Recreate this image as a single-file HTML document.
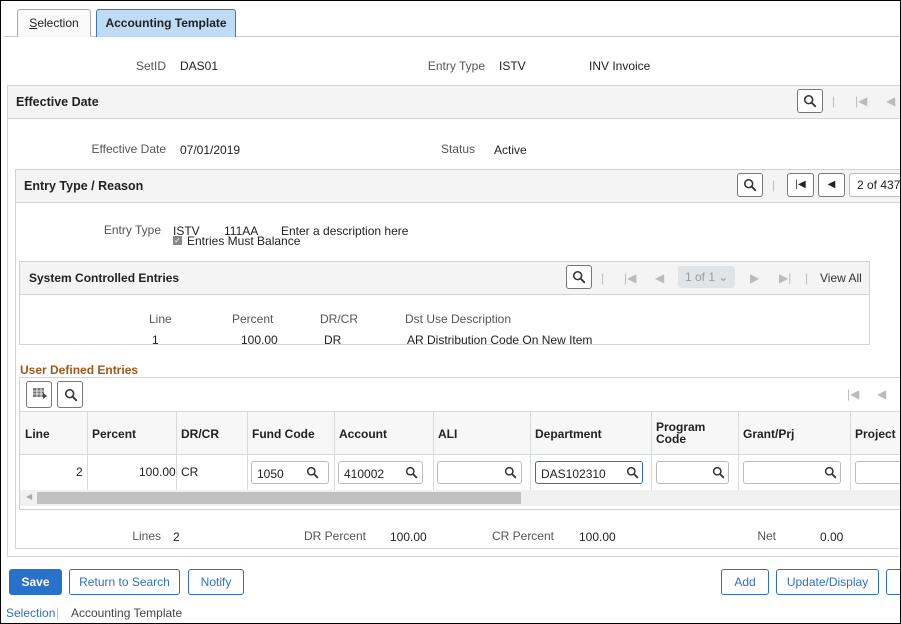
<!DOCTYPE html>
<html><head><style>
*{box-sizing:border-box;margin:0;padding:0}
body{width:901px;height:624px;overflow:hidden;font-family:"Liberation Sans",Arial,sans-serif;font-size:12px;color:#222;background:#fff;position:relative}
.a{position:absolute;white-space:nowrap}
.lbl{color:#555}
.b{font-weight:bold}
.hdr{position:absolute;background:#f4f4f4;border:1px solid #d0d4d8}
.btn{position:absolute;border:1px solid #777;border-radius:3px;background:#fff}
.srch{position:absolute;width:26px;height:24px;border:1px solid #777;border-radius:3px;background:#fff}
.gray{color:#bbb}
.inp{position:absolute;height:23px;border:1px solid #bbb;border-radius:3px;background:#fff;padding:5px 0 0 5px}
.pb{position:absolute;height:26px;border:1px solid #2f6fc7;border-radius:3px;color:#2f6fc7;text-align:center;line-height:24px;font-size:12px;background:#fff}
.col{position:absolute;top:411px;height:79px;border-left:1px solid #d7dbe0}
</style></head><body>
<div class="a" style="left:0;top:0;width:901px;height:624px;border:1px solid #000;z-index:9;pointer-events:none"></div>
<svg width="0" height="0" style="position:absolute"><defs><symbol id="mg" viewBox="0 0 16 16"><circle cx="6.5" cy="6.5" r="4.5" fill="none" stroke="#333" stroke-width="1.8"/><path d="M10 10l4 4" stroke="#333" stroke-width="2.2" stroke-linecap="round"/></symbol></defs></svg>

<!-- tabs -->
<div class="a" style="left:4px;top:36px;width:896px;height:1px;background:#ccc"></div>
<div class="a" style="left:17px;top:9px;width:74px;height:28px;border:1px solid #aaa;border-bottom:none;border-radius:3px 3px 0 0;background:#fafafa;text-align:center;line-height:26px"><u>S</u>election</div>
<div class="a b" style="left:96px;top:9px;width:140px;height:28px;border:1px solid #3c78c3;border-bottom:none;border-radius:3px 3px 0 0;background:#bfdcf7;text-align:center;line-height:26px">Accounting Template</div>

<div class="a lbl" style="right:735px;top:59px">SetID</div>
<div class="a" style="left:180px;top:59px">DAS01</div>
<div class="a lbl" style="right:416px;top:59px">Entry Type</div>
<div class="a" style="left:499px;top:59px">ISTV</div>
<div class="a" style="left:589px;top:59px">INV Invoice</div>

<!-- outer panel -->
<div class="a" style="left:7px;top:85px;width:900px;height:472px;border:1px solid #d0d4d8"></div>
<div class="hdr" style="left:7px;top:85px;width:900px;height:34px"></div>
<div class="a b" style="left:16px;top:95px;font-size:12.5px">Effective Date</div>
<div class="srch" style="left:797px;top:89px"><svg width="14" height="14" style="margin:4px 0 0 5px"><use href="#mg"/></svg></div>
<div class="a gray" style="left:832px;top:94px">|</div>
<div class="a gray" style="left:855px;top:94px">|◀</div>
<div class="a gray" style="left:886px;top:94px">◀</div>

<div class="a lbl" style="right:735px;top:142px">Effective Date</div>
<div class="a" style="left:180px;top:143px">07/01/2019</div>
<div class="a lbl" style="right:426px;top:142px">Status</div>
<div class="a" style="left:494px;top:143px">Active</div>

<!-- entry type panel -->
<div class="a" style="left:15px;top:169px;width:900px;height:380px;border:1px solid #d0d4d8"></div>
<div class="hdr" style="left:15px;top:169px;width:900px;height:34px"></div>
<div class="a b" style="left:24px;top:179px;font-size:12.5px">Entry Type / Reason</div>
<div class="srch" style="left:737px;top:173px"><svg width="14" height="14" style="margin:4px 0 0 5px"><use href="#mg"/></svg></div>
<div class="a gray" style="left:772px;top:178px">|</div>
<div class="btn" style="left:787px;top:173px;width:27px;height:24px;text-align:center;line-height:22px;font-size:10px">|◀</div>
<div class="btn" style="left:818px;top:173px;width:27px;height:24px;text-align:center;line-height:22px;font-size:10px">◀</div>
<div class="btn" style="left:849px;top:173px;width:60px;height:24px;line-height:22px;padding-left:7px;border-color:#bbb">2 of 437</div>

<div class="a lbl" style="right:740px;top:223px">Entry Type</div>
<div class="a" style="left:173px;top:224px">ISTV</div>
<div class="a" style="left:224px;top:224px">111AA</div>
<div class="a" style="left:281px;top:224px">Enter a description here</div>
<div class="a" style="left:173px;top:236px;width:9px;height:9px;background:#888;color:#fff;font-size:8px;line-height:9px;text-align:center">✓</div>
<div class="a" style="left:187px;top:234px">Entries Must Balance</div>

<!-- system controlled -->
<div class="a" style="left:19px;top:261px;width:851px;height:84px;border:1px solid #d0d4d8"></div>
<div class="hdr" style="left:19px;top:261px;width:851px;height:34px"></div>
<div class="a b" style="left:29px;top:271px">System Controlled Entries</div>
<div class="srch" style="left:566px;top:265px"><svg width="14" height="14" style="margin:4px 0 0 5px"><use href="#mg"/></svg></div>
<div class="a gray" style="left:601px;top:271px">|</div>
<div class="a gray" style="left:624px;top:271px">|◀</div>
<div class="a gray" style="left:655px;top:271px">◀</div>
<div class="a" style="left:678px;top:266px;width:57px;height:22px;background:#e1e4e7;border-radius:3px;color:#999;padding:4px 0 0 7px">1 of 1 ⌄</div>
<div class="a gray" style="left:750px;top:271px">▶</div>
<div class="a gray" style="left:779px;top:271px">▶|</div>
<div class="a gray" style="left:805px;top:271px">|</div>
<div class="a" style="left:820px;top:271px;color:#333">View All</div>
<div class="a lbl" style="left:149px;top:312px">Line</div>
<div class="a lbl" style="left:232px;top:312px">Percent</div>
<div class="a lbl" style="left:320px;top:312px">DR/CR</div>
<div class="a lbl" style="left:405px;top:312px">Dst Use Description</div>
<div class="a" style="left:152px;top:333px">1</div>
<div class="a" style="left:241px;top:333px">100.00</div>
<div class="a" style="left:324px;top:333px">DR</div>
<div class="a" style="left:407px;top:333px">AR Distribution Code On New Item</div>

<!-- user defined -->
<div class="a b" style="left:20px;top:363px;color:#a0581c">User Defined Entries</div>
<div class="a" style="left:19px;top:377px;width:900px;height:133px;border:1px solid #d0d4d8"></div>
<div class="srch" style="left:26px;top:381px;height:27px"><svg width="14" height="12" style="margin:6px 0 0 6px"><rect x="0" y="0" width="11" height="9" fill="#777"/><path d="M0 3h11M0 6h11M4 0v9M8 0v9" stroke="#fff" stroke-width="0.8"/><path d="M10 5l4 3-4 3z" fill="#444"/></svg></div>
<div class="srch" style="left:57px;top:381px;height:27px"><svg width="14" height="14" style="margin:6px 0 0 6px"><use href="#mg"/></svg></div>
<div class="a gray" style="left:847px;top:387px">|◀</div>
<div class="a gray" style="left:877px;top:387px">◀</div>
<div class="a" style="left:20px;top:411px;width:880px;height:44px;background:#f7f7f7;border-top:1px solid #d7dbe0;border-bottom:1px solid #d7dbe0"></div>
<div class="col" style="left:87px"></div><div class="col" style="left:176px"></div><div class="col" style="left:247px"></div><div class="col" style="left:334px"></div><div class="col" style="left:433px"></div><div class="col" style="left:530px"></div><div class="col" style="left:651px"></div><div class="col" style="left:738px"></div><div class="col" style="left:850px"></div>
<div class="a b" style="left:25px;top:427px">Line</div>
<div class="a b" style="left:92px;top:427px">Percent</div>
<div class="a b" style="left:181px;top:427px">DR/CR</div>
<div class="a b" style="left:252px;top:427px">Fund Code</div>
<div class="a b" style="left:339px;top:427px">Account</div>
<div class="a b" style="left:438px;top:427px">ALI</div>
<div class="a b" style="left:535px;top:427px">Department</div>
<div class="a b" style="left:656px;top:421px;line-height:12px">Program<br>Code</div>
<div class="a b" style="left:743px;top:427px">Grant/Prj</div>
<div class="a b" style="left:855px;top:427px">Project</div>
<div class="a" style="left:76px;top:465px">2</div>
<div class="a" style="left:139px;top:465px">100.00</div>
<div class="a" style="left:181px;top:465px">CR</div>
<div class="inp" style="left:251px;top:461px;width:78px">1050</div>
<div class="inp" style="left:338px;top:461px;width:85px">410002</div>
<div class="inp" style="left:437px;top:461px;width:85px"></div>
<div class="inp" style="left:535px;top:461px;width:108px;border:1.5px solid #2f6fc7">DAS102310</div>
<div class="inp" style="left:656px;top:461px;width:73px"></div>
<div class="inp" style="left:743px;top:461px;width:98px"></div>
<div class="inp" style="left:855px;top:461px;width:60px"></div>
<svg class="a" width="13" height="13" style="left:306px;top:466px"><use href="#mg"/></svg>
<svg class="a" width="13" height="13" style="left:405px;top:466px"><use href="#mg"/></svg>
<svg class="a" width="13" height="13" style="left:504px;top:466px"><use href="#mg"/></svg>
<svg class="a" width="13" height="13" style="left:626px;top:466px"><use href="#mg"/></svg>
<svg class="a" width="13" height="13" style="left:712px;top:466px"><use href="#mg"/></svg>
<svg class="a" width="13" height="13" style="left:824px;top:466px"><use href="#mg"/></svg>
<div class="a" style="left:20px;top:490px;width:880px;height:16px;background:#f0f0f0"></div>
<div class="a" style="left:37px;top:492px;width:484px;height:12px;background:#c1c1c1"></div>
<div class="a" style="left:26px;top:492px;color:#aaa;font-size:8px">◀</div>

<div class="a lbl" style="right:740px;top:529px">Lines</div>
<div class="a" style="left:173px;top:530px">2</div>
<div class="a lbl" style="right:535px;top:529px">DR Percent</div>
<div class="a" style="left:390px;top:530px">100.00</div>
<div class="a lbl" style="right:347px;top:529px">CR Percent</div>
<div class="a" style="left:579px;top:530px">100.00</div>
<div class="a lbl" style="right:125px;top:529px">Net</div>
<div class="a" style="left:820px;top:530px">0.00</div>

<!-- buttons -->
<div class="pb b" style="left:9px;top:569px;width:53px;background:#2872cc;color:#fff;border-color:#2872cc">Save</div>
<div class="pb" style="left:69px;top:569px;width:111px">Return to Search</div>
<div class="pb" style="left:188px;top:569px;width:56px">Notify</div>
<div class="pb" style="left:721px;top:569px;width:48px">Add</div>
<div class="pb" style="left:776px;top:569px;width:103px">Update/Display</div>
<div class="pb" style="left:886px;top:569px;width:40px"></div>

<div class="a" style="left:6px;top:606px;color:#2f6fc7">Selection</div>
<div class="a gray" style="left:56px;top:606px">|</div>
<div class="a" style="left:71px;top:606px;color:#444">Accounting Template</div>
</body></html>
